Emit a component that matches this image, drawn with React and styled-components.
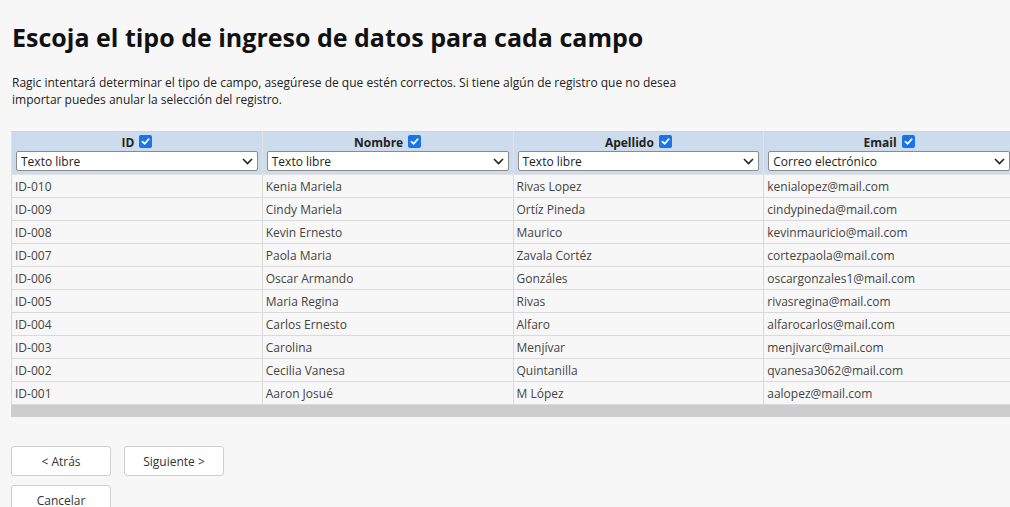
import React from 'react';
import styled, { createGlobalStyle } from 'styled-components';

const GlobalStyle = createGlobalStyle`
  html, body {
    margin: 0;
    padding: 0;
    background: #f7f7f7;
    overflow: hidden;
  }
  body {
    font-family: "Open Sans", "Liberation Sans", sans-serif;
    color: #222;
  }
`;

const Page = styled.div`
  padding: 0 0 0 11px;
`;

const Title = styled.h1`
  font-size: 25px;
  font-weight: 700;
  color: #111;
  margin: 0;
  padding: 18px 0 0 1px;
  line-height: 38px;
`;

const Intro = styled.p`
  font-size: 12px;
  line-height: 17px;
  margin: 18px 0 0 1px;
  max-width: 690px;
  color: #222;
`;

const Scroller = styled.div`
  margin-top: 23px;
  width: 1010px;
  border-bottom: 12px solid #cdcdcd;
`;

const Table = styled.table`
  border-collapse: collapse;
  table-layout: fixed;
  width: 1004px;
`;

const HeadCell = styled.th`
  background: #cddcec;
  border: 1px solid #e2e2e2;
  border-top: 1px solid #c9d5e2;
  padding: 2px 4px 3px;
  font-size: 12px;
  font-weight: 700;
  color: #222;
  vertical-align: top;
`;

const HeadLabel = styled.div`
  display: flex;
  align-items: center;
  justify-content: center;
  gap: 5px;
  height: 17px;
`;

const Check = styled.span`
  width: 13px;
  height: 13px;
  border-radius: 2px;
  background: #1a73e8;
  display: inline-flex;
  align-items: center;
  justify-content: center;
  margin-top: -3px;
`;

const Select = styled.div`
  display: flex;
  align-items: center;
  justify-content: space-between;
  height: 18px;
  background: #fff;
  border: 1px solid #8a8a8a;
  border-radius: 2px;
  padding: 0 4px;
  font-size: 12px;
  font-weight: 400;
  color: #222;
  text-align: left;
`;

const Cell = styled.td`
  height: 22px;
  padding: 0 3px;
  border: 1px solid #dadada;
  border-top-color: #d2d2d2;
  font-size: 12px;
  color: #444;
  background: #f7f7f7;
  white-space: nowrap;
  overflow: hidden;
`;

const Actions = styled.div`
  display: flex;
  flex-wrap: wrap;
  gap: 9px 13px;
  width: 240px;
  margin-top: 29px;
`;

const Button = styled.button`
  width: 100px;
  height: 30px;
  background: #fff;
  border: 1px solid #cfcfcf;
  border-radius: 3px;
  font-family: inherit;
  font-size: 12px;
  color: #333;
  padding: 0;
`;

const columns = [
  { label: 'ID', type: 'Texto libre' },
  { label: 'Nombre', type: 'Texto libre' },
  { label: 'Apellido', type: 'Texto libre' },
  { label: 'Email', type: 'Correo electrónico' },
];

const rows = [
  ['ID-010', 'Kenia Mariela', 'Rivas Lopez', 'kenialopez@mail.com'],
  ['ID-009', 'Cindy Mariela', 'Ortíz Pineda', 'cindypineda@mail.com'],
  ['ID-008', 'Kevin Ernesto', 'Maurico', 'kevinmauricio@mail.com'],
  ['ID-007', 'Paola Maria', 'Zavala Cortéz', 'cortezpaola@mail.com'],
  ['ID-006', 'Oscar Armando', 'Gonzáles', 'oscargonzales1@mail.com'],
  ['ID-005', 'Maria Regina', 'Rivas', 'rivasregina@mail.com'],
  ['ID-004', 'Carlos Ernesto', 'Alfaro', 'alfarocarlos@mail.com'],
  ['ID-003', 'Carolina', 'Menjívar', 'menjivarc@mail.com'],
  ['ID-002', 'Cecilia Vanesa', 'Quintanilla', 'qvanesa3062@mail.com'],
  ['ID-001', 'Aaron Josué', 'M López', 'aalopez@mail.com'],
];

const CheckMark = () => (
  <svg width="9" height="9" viewBox="0 0 10 10">
    <path d="M1.5 5.2 L4 7.6 L8.6 2.4" fill="none" stroke="#fff" strokeWidth="1.8" strokeLinecap="round" strokeLinejoin="round" />
  </svg>
);

const Chevron = () => (
  <svg width="11" height="7" viewBox="0 0 11 7">
    <path d="M1 1 L5.5 5.5 L10 1" fill="none" stroke="#222" strokeWidth="1.6" />
  </svg>
);

const App = () => {
  return (
    <Page>
      <GlobalStyle />
      <Title>Escoja el tipo de ingreso de datos para cada campo</Title>
      <Intro>
        Ragic intentará determinar el tipo de campo, asegúrese de que estén correctos. Si tiene algún de registro que no desea importar puedes anular la selección del registro.
      </Intro>

      <Scroller>
        <Table>
          <thead>
            <tr>
              {columns.map((col) => (
                <HeadCell key={col.label}>
                  <HeadLabel>
                    {col.label}
                    <Check><CheckMark /></Check>
                  </HeadLabel>
                  <Select>
                    <span>{col.type}</span>
                    <Chevron />
                  </Select>
                </HeadCell>
              ))}
            </tr>
          </thead>
          <tbody>
            {rows.map((row) => (
              <tr key={row[0]}>
                {row.map((value, i) => (
                  <Cell key={i}>{value}</Cell>
                ))}
              </tr>
            ))}
          </tbody>
        </Table>
      </Scroller>

      <Actions>
        <Button>&lt; Atrás</Button>
        <Button>Siguiente &gt;</Button>
        <Button>Cancelar</Button>
      </Actions>
    </Page>
  );
};

export default App;
